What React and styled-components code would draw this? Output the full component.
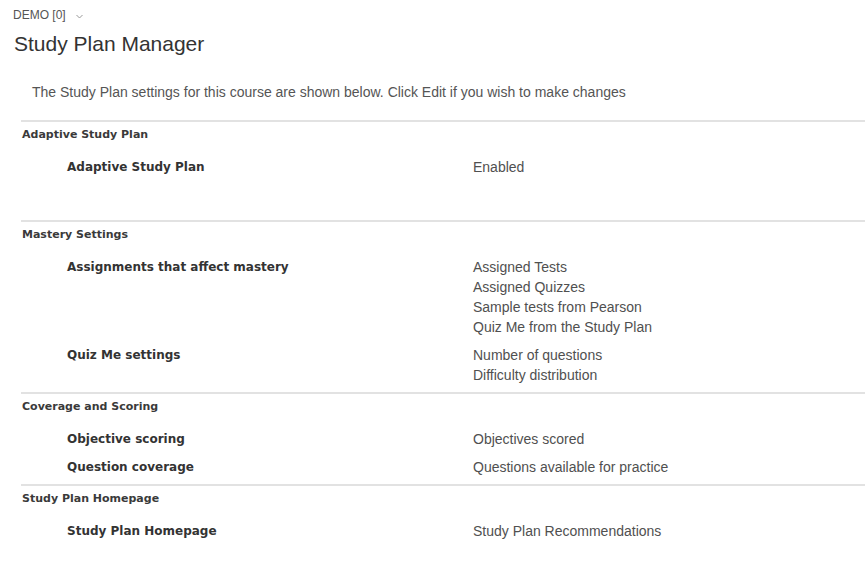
import React from "react";
import styled, { createGlobalStyle } from "styled-components";

const Global = createGlobalStyle`
  html, body { margin: 0; padding: 0; background: #ffffff; }
  body { font-family: "Liberation Sans", Arial, sans-serif; color: #333; }
`;

const Page = styled.div`
  width: 865px;
  min-height: 579px;
  overflow: hidden;
  display: flex;
  flex-direction: column;
`;

const TopBar = styled.div`
  display: flex;
  align-items: center;
  gap: 6px;
  padding: 8px 0 0 13px;
  height: 14px;
  font-size: 12px;
  line-height: 14px;
  color: #555;
`;

const Chevron = styled.svg`
  width: 7px;
  height: 5px;
  margin-left: 4px;
  margin-top: 3px;
`;

const Title = styled.h1`
  margin: 10px 0 0 14px;
  font-size: 21px;
  font-weight: normal;
  color: #333;
  line-height: 24px;
`;

const Intro = styled.p`
  margin: 27px 0 0 32px;
  font-size: 14px;
  line-height: 18px;
  color: #555;
`;

const Sections = styled.div`
  margin: 19px 0 0 21px;
  display: flex;
  flex-direction: column;
`;

const Section = styled.section`
  border-top: 2px solid #e2e2e2;
  padding-bottom: ${(p) => p.$extra}px;
`;

const SectionHeader = styled.div`
  padding-left: 1px;
  height: 25px;
  line-height: 25px;
  font-family: "DejaVu Sans", Verdana, sans-serif;
  font-weight: bold;
  font-size: 11px;
  color: #3a3a3a;
  margin-bottom: 10px;
`;

const Rows = styled.div`
  display: flex;
  flex-direction: column;
  gap: 8px;
`;

const Row = styled.div`
  display: grid;
  grid-template-columns: 406px 1fr;
  padding-left: 46px;
`;

const Label = styled.div`
  font-family: "DejaVu Sans", Verdana, sans-serif;
  font-weight: bold;
  font-size: 12px;
  line-height: 20px;
  color: #333;
`;

const Values = styled.div`
  display: flex;
  flex-direction: column;
`;

const Value = styled.div`
  font-size: 14px;
  line-height: 20px;
  color: #505050;
`;

const data = [
  {
    title: "Adaptive Study Plan",
    extra: 43,
    rows: [{ label: "Adaptive Study Plan", values: ["Enabled"] }],
  },
  {
    title: "Mastery Settings",
    extra: 7,
    rows: [
      {
        label: "Assignments that affect mastery",
        values: [
          "Assigned Tests",
          "Assigned Quizzes",
          "Sample tests from Pearson",
          "Quiz Me from the Study Plan",
        ],
      },
      {
        label: "Quiz Me settings",
        values: ["Number of questions", "Difficulty distribution"],
      },
    ],
  },
  {
    title: "Coverage and Scoring",
    extra: 7,
    rows: [
      { label: "Objective scoring", values: ["Objectives scored"] },
      { label: "Question coverage", values: ["Questions available for practice"] },
    ],
  },
  {
    title: "Study Plan Homepage",
    extra: 30,
    rows: [{ label: "Study Plan Homepage", values: ["Study Plan Recommendations"] }],
  },
];

export default function App() {
  return (
    <Page>
      <Global />
      <TopBar>
        <span>DEMO [0]</span>
        <Chevron viewBox="0 0 7 5">
          <path d="M0.5 1 L3.5 4 L6.5 1" fill="none" stroke="#999" strokeWidth="1" />
        </Chevron>
      </TopBar>
      <Title>Study Plan Manager</Title>
      <Intro>
        The Study Plan settings for this course are shown below. Click Edit if you wish to make changes
      </Intro>
      <Sections>
        {data.map((s) => (
          <Section key={s.title} $extra={s.extra}>
            <SectionHeader>{s.title}</SectionHeader>
            <Rows>
              {s.rows.map((r) => (
                <Row key={r.label}>
                  <Label>{r.label}</Label>
                  <Values>
                    {r.values.map((v) => (
                      <Value key={v}>{v}</Value>
                    ))}
                  </Values>
                </Row>
              ))}
            </Rows>
          </Section>
        ))}
      </Sections>
    </Page>
  );
}
